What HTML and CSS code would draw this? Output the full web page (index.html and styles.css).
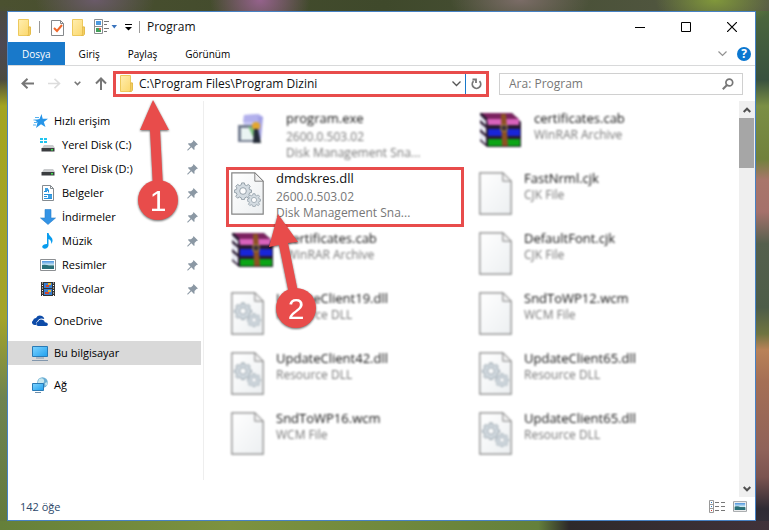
FILE: index.html
```html
<!DOCTYPE html>
<html lang="tr">
<head>
<meta charset="utf-8">
<title>Program</title>
<link rel="stylesheet" href="styles.css">
</head>
<body>
<svg class="defs" aria-hidden="true">
  <defs>
    <linearGradient id="gold" x1="0" y1="0" x2="1" y2="1"><stop offset="0" stop-color="#ffeeb0"/><stop offset="1" stop-color="#fbd667"/></linearGradient>
    <linearGradient id="paper" x1="0" y1="0" x2="1" y2="1"><stop offset="0" stop-color="#fff"/><stop offset="1" stop-color="#eceff1"/></linearGradient>
    <linearGradient id="screen" x1="0" y1="0" x2="1" y2="1"><stop offset="0" stop-color="#7fd4ff"/><stop offset="1" stop-color="#1fa0ee"/></linearGradient>
    <linearGradient id="photo" x1="0" y1="0" x2="0" y2="1"><stop offset="0" stop-color="#4c93dd"/><stop offset=".5" stop-color="#cbe8f5"/><stop offset=".6" stop-color="#3a7773"/><stop offset="1" stop-color="#1f6190"/></linearGradient>
    <symbol id="folder" viewBox="0 0 14 17"><path d="M.5.5h10v7.500h2v7h-1.500v1.500H.5z" fill="url(#gold)" stroke="#edc95c"/><path d="M10.500 8v6.500q0 1.500-1 2h2q1-.5 1-2V8z" fill="#f3cf62" stroke="#dfb544" stroke-width=".7"/></symbol>
    <symbol id="pin" viewBox="0 0 11 11"><path d="M6.500 0 11 4.500 9.500 5 7.500 7v2.500L7 10 4.300 7.300 1 10.500H.3V9.800L3.500 6.500 1 4l.5-.7H4L6 1.500z" fill="#8b98a4"/></symbol>
    <symbol id="disk" viewBox="0 0 16 14"><path d="M4 7h9l2 3H2z" fill="#c9cbcd"/><path d="M1.500 10h13v3.500h-13z" fill="#3b3d40"/><path d="M11 11h2v1.500h-2z" fill="#3fe04a"/></symbol>
    <symbol id="gear" viewBox="-10 -10 20 20"><g fill="#d3dbe1" stroke="#8d9aa3" stroke-width="1"><path d="M-1.500-9h3l.5 2.200 2 .8L6-7.300 8-5.200 6.700-3.300l.7 1.800 2.100.4v2.700l-2.100.5-.8 1.900L8 6.200 6.100 8 4 6.700l-1.900.8-.6 2.100h-3l-.5-2.100-2-.8L-6 8l-2-2 1.300-2-.8-1.900-2.100-.5v-2.700l2.100-.5.8-1.800L-8-5.200-6-7.300-4-6l2-.8z"/><circle r="3.700" fill="#fbfcfd"/></g></symbol>
    <symbol id="file" viewBox="0 0 33 43"><path d="M.8.8h23l8.400 8.400v33H.8z" fill="url(#paper)" stroke="#858585" stroke-width="1.200"/><path d="M23.800.8v8.400h8.400z" fill="#f2f2f2" stroke="#858585"/></symbol>
    <symbol id="dll" viewBox="0 0 33 43"><use href="#file"/><use href="#gear" x="3" y="10" width="18" height="18"/><use href="#gear" x="16" y="21" width="14" height="14"/></symbol>
    <symbol id="archive" viewBox="0 0 43 36"><path d="M1 1h32l9 9v25H8L1 29z" fill="#2a1a32"/><path d="M1 3l6 6v4l-6-5zM1 11l6 5v6l-6-5zM1 20l6 5v7l-6-5z" fill="#e6e8f2"/><path d="M3 1h29l8 6H9z" fill="#7b2360"/><path d="M8 7h32v6H9z" fill="#d862bc"/><path d="M9 17h32v7H9z" fill="#1825d8"/><path d="M9 27h32v7H9z" fill="#0ca516"/><path d="M22 2h5l2 32h-6z" fill="#8c5123"/><path d="M22 13h6v6h-6z" fill="#3d3035" stroke="#b08a4a"/></symbol>
    <symbol id="installer" viewBox="0 0 34 36"><path d="M9 3l15-1 4 3-4 18H8z" fill="#c7c7f4"/><path d="M23 3l5 2-2 22-5 3z" fill="#a3a1e4"/><path d="M9 3l15-1-2 8H8z" fill="#b2b0ec"/><path d="M3 13h16v17H3z" fill="#747d90"/><path d="M6 16h13v12H6z" fill="#eaf4f3"/><path d="M13 14l8 3-3 8z" fill="#7bbf7c"/><circle cx="21" cy="14" r="4" fill="#e2a62f"/><path d="M19 17h4l3 14h-8z" fill="#252c38"/></symbol>
    <symbol id="pic" viewBox="0 0 16 12"><path d="M.5.500h15v11H.5z" fill="#fff" stroke="#8c8f92"/><path d="M2 2h12v8H2z" fill="url(#photo)"/><path d="M2 6q4-1 7 1t5 0v3H2z" fill="#286f77"/></symbol>
  </defs>
</svg>

<main class="window">
  <header class="titlebar">
    <svg class="folder" aria-hidden="true"><use href="#folder"/></svg>
    <span class="divider"></span>
    <div class="quick">
      <button aria-label="Özellikler"><svg width="13" height="17" viewBox="0 0 13 17"><path d="M.5 1.500h9l3 3v12H.5z" fill="#fff" stroke="#85888b"/><path d="M9.500 1.500v3h3" fill="none" stroke="#85888b"/><path d="M3 9l3 3 5-6" fill="none" stroke="#f0672a" stroke-width="2"/></svg></button>
      <button aria-label="Yeni klasör"><svg class="folder"><use href="#folder"/></svg></button>
      <button aria-label="Görünüm seçenekleri"><svg width="23" height="16" viewBox="0 0 23 16"><path d="M.5.500h8v14h-8zM.5 7.500h8" fill="#fff" stroke="#8a8d90"/><path d="M2 2h5v4H2z" fill="#4d9ade"/><path d="M2 9h5v4H2z" fill="#43a059"/><path d="M5 9h2v2H5z" fill="#df6342"/><path d="M10 2.500h5M10 5.500h3M10 9.500h5M10 12.500h3" stroke="#777"/><path d="M17.500 6h5.500l-2.700 3.500z" fill="#3973bd"/></svg></button>
      <button aria-label="Özelleştir"><svg width="7" height="7" viewBox="0 0 7 7"><path d="M0 .5h7" stroke="#000"/><path d="M0 3h7L3.500 6.500z"/></svg></button>
    </div>
    <span class="divider"></span>
    <h1>Program</h1>
    <div class="controls">
      <button aria-label="Simge durumuna küçült"><svg width="10" height="10" viewBox="0 0 10 10"><path d="M0 5.500h10" stroke="#000"/></svg></button>
      <button aria-label="Ekranı kapla"><svg width="10" height="10" viewBox="0 0 10 10"><path d="M.5.500h9v9h-9z" fill="none" stroke="#000"/></svg></button>
      <button aria-label="Kapat"><svg width="10" height="10" viewBox="0 0 10 10"><path d="M0 0l10 10M10 0L0 10" stroke="#000" stroke-width="1.200"/></svg></button>
    </div>
  </header>

  <nav class="ribbon" aria-label="Şerit">
    <button class="tab active">Dosya</button>
    <button class="tab">Giriş</button>
    <button class="tab">Paylaş</button>
    <button class="tab">Görünüm</button>
    <button class="expand" aria-label="Şeridi genişlet"><svg width="9" height="6" viewBox="0 0 9 6"><path d="M.5.500l4 4 4-4" fill="none" stroke="#929292" stroke-width="1.200"/></svg></button>
    <button class="help" aria-label="Yardım">?</button>
  </nav>

  <div class="toolbar">
    <div class="history">
      <button aria-label="Geri"><svg width="13" height="11" viewBox="0 0 13 11"><path d="M13 5.500H2M6.500.8L1.500 5.500l5 4.700" fill="none" stroke="#767676" stroke-width="2"/></svg></button>
      <button aria-label="İleri"><svg width="13" height="11" viewBox="0 0 13 11"><path d="M0 5.500h11M6.500.8l5 4.700-5 4.700" fill="none" stroke="#dcdcdc" stroke-width="1.600"/></svg></button>
      <button aria-label="Son konumlar"><svg width="7" height="5" viewBox="0 0 7 5"><path d="M.7.700l2.800 2.800L6.300.7" fill="none" stroke="#777" stroke-width="1.600"/></svg></button>
      <button aria-label="Yukarı"><svg width="12" height="13" viewBox="0 0 12 13"><path d="M6 13V2M1 6.500l5-5 5 5" fill="none" stroke="#767676" stroke-width="2"/></svg></button>
    </div>
    <div class="address">
      <svg class="folder" aria-hidden="true"><use href="#folder"/></svg>
      <input type="text" aria-label="Adres" value="C:\Program Files\Program Dizini">
      <button aria-label="Önceki konumlar"><svg width="9" height="6" viewBox="0 0 9 6"><path d="M.5.500l4 4 4-4" fill="none" stroke="#555" stroke-width="1.300"/></svg></button>
      <button class="refresh" aria-label="Yenile"><svg width="11" height="12" viewBox="0 0 11 12"><path d="M8.500 3.200A4.200 4.200 0 1 1 2.500 3.200M1.500 1.500h3.500v3.500" fill="none" stroke="#777" stroke-width="1.800"/></svg></button>
    </div>
    <div class="search">
      <input type="text" aria-label="Ara" placeholder="Ara: Program">
      <svg width="12" height="12" viewBox="0 0 12 12" aria-hidden="true"><circle cx="7.300" cy="4.500" r="3.400" fill="none" stroke="#777" stroke-width="1.700"/><path d="M5 7L.8 11.200" stroke="#777" stroke-width="2"/></svg>
    </div>
  </div>

  <div class="body">
    <nav class="sidebar" aria-label="Gezinti bölmesi">
      <ul>
        <li><a href="#"><svg class="ico" viewBox="0 0 16 16"><path d="M9.500 1l1.200 4.700H16l-4.200 3.200L13.500 14 9 11.200 4 15l1.500-5.500L3 7l4.500-1z" fill="#2795e8"/><path d="M3 4.500h4M1.500 7h3M2 9.500h3M1 12h3" stroke="#55b1ef"/></svg>Hızlı erişim</a></li>
        <li class="sub"><a href="#"><svg class="ico" viewBox="0 0 16 16"><path d="M0 1h3v2H0zM4 1h3v2H4zM0 4h3v2H0zM4 4h3v2H4z" fill="#20c5f0"/><use href="#disk" y="1" width="16" height="14"/></svg>Yerel Disk (C:)</a><svg class="pin"><use href="#pin"/></svg></li>
        <li class="sub"><a href="#"><svg class="ico" viewBox="0 0 16 16"><use href="#disk" y="1" width="16" height="14"/></svg>Yerel Disk (D:)</a><svg class="pin"><use href="#pin"/></svg></li>
        <li class="sub"><a href="#"><svg class="ico" viewBox="0 0 16 16"><path d="M2.500.5h8l3 3v12h-11z" fill="#fff" stroke="#858b90"/><path d="M10.500.5v3h3" fill="none" stroke="#858b90"/><path d="M4 6.500h3M8.500 4.500v3M4 9.500h8M4 11.500h3M4 13.500h8" stroke="#2690db"/><path d="M5 3h3v3H5zM8 10h4v3H8z" fill="#3ea0e2"/></svg>Belgeler</a><svg class="pin"><use href="#pin"/></svg></li>
        <li class="sub"><a href="#"><svg class="ico" viewBox="0 0 16 16"><path d="M5 .5h6V9h4.500L8 15.500.5 9H5z" fill="#3393e5" stroke="#287fc9" stroke-width=".6"/></svg>İndirmeler</a><svg class="pin"><use href="#pin"/></svg></li>
        <li class="sub"><a href="#"><svg class="ico" viewBox="0 0 16 16"><path d="M7 0h1.500q.4 2.500 2.500 4 3 3 .3 7 .2-4-2.800-5v6.500q-.5 3-4 3.300-2.500-.3-2.300-2.300.8-2.600 4.800-2.500z" fill="#079cee"/></svg>Müzik</a><svg class="pin"><use href="#pin"/></svg></li>
        <li class="sub"><a href="#"><svg class="ico" viewBox="0 0 16 16"><use href="#pic" y="2" width="16" height="12"/></svg>Resimler</a><svg class="pin"><use href="#pin"/></svg></li>
        <li class="sub"><a href="#"><svg class="ico" viewBox="0 0 16 16"><path d="M1 1h14v14H1z" fill="#333"/><path d="M4 2h8v5H4zM4 8h8v6H4z" fill="#387fd3"/><path d="M6 4h3v2H6zM5 11h4v2H5z" fill="#d04631"/><path d="M8 2h3v2H8zM8 9h3v2H8z" fill="#efb82c"/><path d="M2.500 1.500v14M13.500 1.500v14" stroke="#fff" stroke-dasharray="1 1.500"/></svg>Videolar</a><svg class="pin"><use href="#pin"/></svg></li>
      </ul>
      <ul>
        <li><a href="#"><svg class="ico" viewBox="0 0 16 16"><path d="M2.500 12A2.500 2.500 0 0 1 1 7.500 3 3 0 0 1 4 5q2-3.500 6-2 2 .8 2.300 3-5-2-7 2.500-2 1-1 3.500z" fill="#0d4ba8"/><path d="M6 13q-2-.5-1.800-2.500Q4.500 9 6 8.800 7.500 5.500 11 7q1.500.6 1.800 2.200 3 .2 3.100 2.300Q15.500 13 14 13z" fill="#0d4ba8"/></svg>OneDrive</a></li>
      </ul>
      <ul>
        <li class="selected"><a href="#" aria-current="page"><svg class="ico" viewBox="0 0 16 16"><path d="M.5 1.500h15v10H.5z" fill="url(#screen)" stroke="#297ab5"/><path d="M4 13h8M0 15.500h16" stroke="#8297ad"/></svg>Bu bilgisayar</a></li>
      </ul>
      <ul>
        <li><a href="#"><svg class="ico" viewBox="0 0 16 16"><circle cx="10.500" cy="5.500" r="5.300" fill="#6aaed4"/><path d="M7 2q4-2 5 1T9 7 6 5zM13 6l2.500-1q0 3-2 4z" fill="#c7e7ee"/><path d="M.5 6.500h11v7H.5z" fill="url(#screen)" stroke="#297ab5"/><path d="M3 15.500h6" stroke="#6f90ad"/></svg>Ağ</a></li>
      </ul>
    </nav>

    <section class="files" aria-label="Dosyalar">
      <article class="tile faded"><svg class="wide" viewBox="0 0 43 36"><use href="#installer" x="4" width="34" height="36"/></svg><div class="meta three"><h2>program.exe</h2><p>2600.0.503.02</p><p>Disk Management Sna...</p></div></article>
      <article class="tile faded"><svg class="wide"><use href="#archive"/></svg><div class="meta"><h2>certificates.cab</h2><p>WinRAR Archive</p></div></article>
      <article class="tile marked"><svg class="doc"><use href="#dll"/></svg><div class="meta three"><h2>dmdskres.dll</h2><p>2600.0.503.02</p><p>Disk Management Sna...</p></div></article>
      <article class="tile faded"><svg class="doc"><use href="#file"/></svg><div class="meta"><h2>FastNrml.cjk</h2><p>CJK File</p></div></article>
      <article class="tile faded"><svg class="wide"><use href="#archive"/></svg><div class="meta"><h2>certificates.cab</h2><p>WinRAR Archive</p></div></article>
      <article class="tile faded"><svg class="doc"><use href="#file"/></svg><div class="meta"><h2>DefaultFont.cjk</h2><p>CJK File</p></div></article>
      <article class="tile faded"><svg class="doc"><use href="#dll"/></svg><div class="meta"><h2>UpdateClient19.dll</h2><p>Resource DLL</p></div></article>
      <article class="tile faded"><svg class="doc"><use href="#file"/></svg><div class="meta"><h2>SndToWP12.wcm</h2><p>WCM File</p></div></article>
      <article class="tile faded"><svg class="doc"><use href="#dll"/></svg><div class="meta"><h2>UpdateClient42.dll</h2><p>Resource DLL</p></div></article>
      <article class="tile faded"><svg class="doc"><use href="#dll"/></svg><div class="meta"><h2>UpdateClient65.dll</h2><p>Resource DLL</p></div></article>
      <article class="tile faded"><svg class="doc"><use href="#file"/></svg><div class="meta"><h2>SndToWP16.wcm</h2><p>WCM File</p></div></article>
      <article class="tile faded"><svg class="doc"><use href="#dll"/></svg><div class="meta"><h2>UpdateClient65.dll</h2><p>Resource DLL</p></div></article>
    </section>

    <div class="scrollbar">
      <button aria-label="Yukarı kaydır"><svg width="8" height="6" viewBox="0 0 8 6"><path d="M.7 5L4 1.700 7.300 5" fill="none" stroke="#505050" stroke-width="2"/></svg></button>
      <div class="track"><div class="thumb"></div></div>
      <button aria-label="Aşağı kaydır"><svg width="8" height="6" viewBox="0 0 8 6"><path d="M.7 1L4 4.300 7.300 1" fill="none" stroke="#505050" stroke-width="2"/></svg></button>
    </div>
  </div>

  <footer class="status">
    <span>142 öğe</span>
    <div class="views">
      <button aria-label="Ayrıntılar"><svg width="17" height="13" viewBox="0 0 17 13"><path d="M.5.500h4v12h-4zM.5 4.500h4M.5 8.500h4" fill="#fff" stroke="#999"/><path d="M6 2.500h4M12 2.500h4M6 6.500h4M12 6.500h4M6 10.500h4M12 10.500h4" stroke="#777"/><path d="M2 2h1v1H2zM2 6h1v1H2z" fill="#267ac2"/><path d="M2 10h1v1H2z" fill="#d0372e"/></svg></button>
      <button aria-label="Büyük simgeler"><svg width="14" height="11"><use href="#pic"/></svg></button>
    </div>
  </footer>
</main>

<svg class="callout first" viewBox="0 0 50 126" role="img" aria-label="1. adım"><g class="shape"><path d="M17 2L33 32H24L27 90H17L14 32H4z"/><circle cx="22" cy="102" r="20"/></g><text x="22" y="113">1</text></svg>
<svg class="callout second" viewBox="0 0 60 120" role="img" aria-label="2. adım"><g class="shape"><path d="M14 2L34 30 24 31 34 80 25 82 15 33 5 35z"/><circle cx="32" cy="96" r="20"/></g><text x="32" y="107">2</text></svg>
</body>
</html>
```
FILE: styles.css
```css
* { box-sizing: border-box; }

body {
  position: relative;
  display: flex;
  min-height: 100vh;
  margin: 0;
  padding: 11px 13px 9px 7px;
  font: 12px/16px "Open Sans", "Noto Sans", sans-serif;
  color: #111;
  background:
    radial-gradient(ellipse 50px 40px at 260px 0, #95628c, transparent),
    radial-gradient(ellipse 60px 30px at 95px 0, #6a5a69, transparent),
    radial-gradient(ellipse 70px 30px at 520px 0, #7b6c67, transparent),
    radial-gradient(ellipse 60px 30px at 715px 0, #81983b, transparent),
    radial-gradient(ellipse 40px 40px at 0 45px, #4d4854, transparent),
    linear-gradient(90deg, #65803a 0, #7d923f 30%, #64803b 70%, #2d292b 74%, #40323a 100%) bottom / 100% 9px no-repeat,
    linear-gradient(90deg, #4b5130, #3f492b 50%, #565a46) top / 100% 11px no-repeat,
    linear-gradient(#4b4b3c 0, #4b4b3c 15%, #a3a421 20%, #a3a32a 60%, #6e8351 75%, #62793c 100%) left / 20px 100% no-repeat,
    linear-gradient(#4f6b3c 0, #38513f 15%, #7b8f45 20%, #71813c 30%, #a9766b 34%, #a5716b 40%, #55604d 46%, #4d5c48 58%, #6f7440 63%, #b98258 66%, #a56f55 72%, #8f6259 85%, #7b5450 90%, #2f2b34 96%, #35303a 100%);
}

button, input { font: inherit; color: inherit; border: 0; padding: 0; background: none; }
button { display: flex; align-items: center; justify-content: center; }
svg { display: block; flex: none; }
h1, h2, p, ul { margin: 0; padding: 0; font: inherit; list-style: none; }
a { color: inherit; text-decoration: none; }
.defs { position: absolute; width: 0; height: 0; }
.folder { width: 14px; height: 17px; }

.window {
  flex: 1;
  display: flex;
  flex-direction: column;
  min-width: 0;
  background: #fff;
  border: 1px solid #4782c4;
}

.titlebar { display: flex; align-items: center; height: 30px; padding-left: 10px; }
.divider { width: 1px; height: 12px; margin: 0 7px; background: #999; }
.quick { display: flex; align-items: center; gap: 8px; padding-left: 4px; }
.controls { display: flex; gap: 36px; margin-left: auto; padding-right: 18px; }

.ribbon { display: flex; height: 24px; align-items: stretch; border-bottom: 1px solid #d8d9da; font-size: 10px; color: #000; }
.tab { padding: 0 14px; }
.tab.active { color: #fff; background: #1979ca; }
.expand { margin-left: auto; }
.help { align-self: center; width: 14px; height: 14px; margin: 0 4px 0 10px; border-radius: 50%; color: #fff; background: #0b77d0; font-size: 12px; font-weight: 700; }

.toolbar { display: flex; align-items: center; height: 35px; padding-right: 12px; }
.history { display: flex; align-items: center; justify-content: space-between; width: 105px; padding: 0 6px 0 13px; }
.address { display: flex; align-items: center; flex: 376 1 376px; min-width: 0; height: 26px; padding-left: 4px; border: 3px solid #e84c4b; }
.address input { flex: 1; min-width: 0; padding-left: 5px; outline: 0; }
.refresh { align-self: stretch; width: 21px; margin-left: 4px; border-left: 1px solid #1979ca; }
.search { display: flex; align-items: center; flex: 244 1 244px; min-width: 0; height: 22px; margin-left: 10px; padding: 0 8px 0 9px; border: 1px solid #d0d0d0; }
.search input { flex: 1; min-width: 0; outline: 0; }
.search input::placeholder { color: #777; opacity: 1; }

.body { flex: 1; display: flex; min-height: 0; }
.sidebar { width: 196px; padding: 8px 2px 0 0; margin-bottom: 17px; border-right: 1px solid #eee; font-size: 11px; color: #000; }
.sidebar ul + ul { margin-top: 8px; }
.sidebar li { display: flex; align-items: center; height: 24px; padding: 0 3px 0 24px; }
.sidebar .sub { padding-left: 32px; }
.sidebar .selected { background: #d9d9d9; }
.sidebar a { flex: 1; display: flex; align-items: center; gap: 6px; }
.ico { width: 16px; height: 16px; }
.pin { width: 11px; height: 11px; }

.files { flex: 1; display: grid; grid-template-columns: repeat(2, 248px); grid-auto-rows: 60px; align-content: start; padding: 6px 0 0 22px; min-width: 0; }
.tile { display: flex; align-items: flex-start; gap: 12px; margin-right: 10px; padding: 2px; border: 3px solid transparent; }
.tile.marked { border-color: #e84c4b; }
.tile.faded { filter: blur(.1em); }
.doc { width: 33px; height: 43px; }
.wide { width: 43px; height: 36px; }
.meta { margin-top: -3px; white-space: nowrap; }
.meta h2 { font-size: 13px; line-height: 18px; }
.meta p { color: #777; }
.three h2 { margin-bottom: 2px; }

.scrollbar { display: flex; flex-direction: column; width: 16px; background: #efefef; }
.scrollbar button { height: 17px; }
.track { flex: 1; }
.thumb { width: 15px; height: 50px; background: #a6a6a6; }

.status { display: flex; align-items: center; justify-content: space-between; height: 23px; padding: 0 8px 4px 12px; font-size: 11px; color: #2c4769; }
.views { display: flex; align-items: center; gap: 7px; }

.callout { position: absolute; overflow: visible; filter: drop-shadow(0 1px 1px rgba(0, 0, 0, .6)); }
.callout .shape { fill: #e84c4b; }
.callout text { font: 30px "Liberation Sans", sans-serif; text-anchor: middle; fill: #fff; }
.first { left: 136px; top: 98px; width: 50px; height: 126px; }
.second { left: 264px; top: 212px; width: 60px; height: 120px; }
```
